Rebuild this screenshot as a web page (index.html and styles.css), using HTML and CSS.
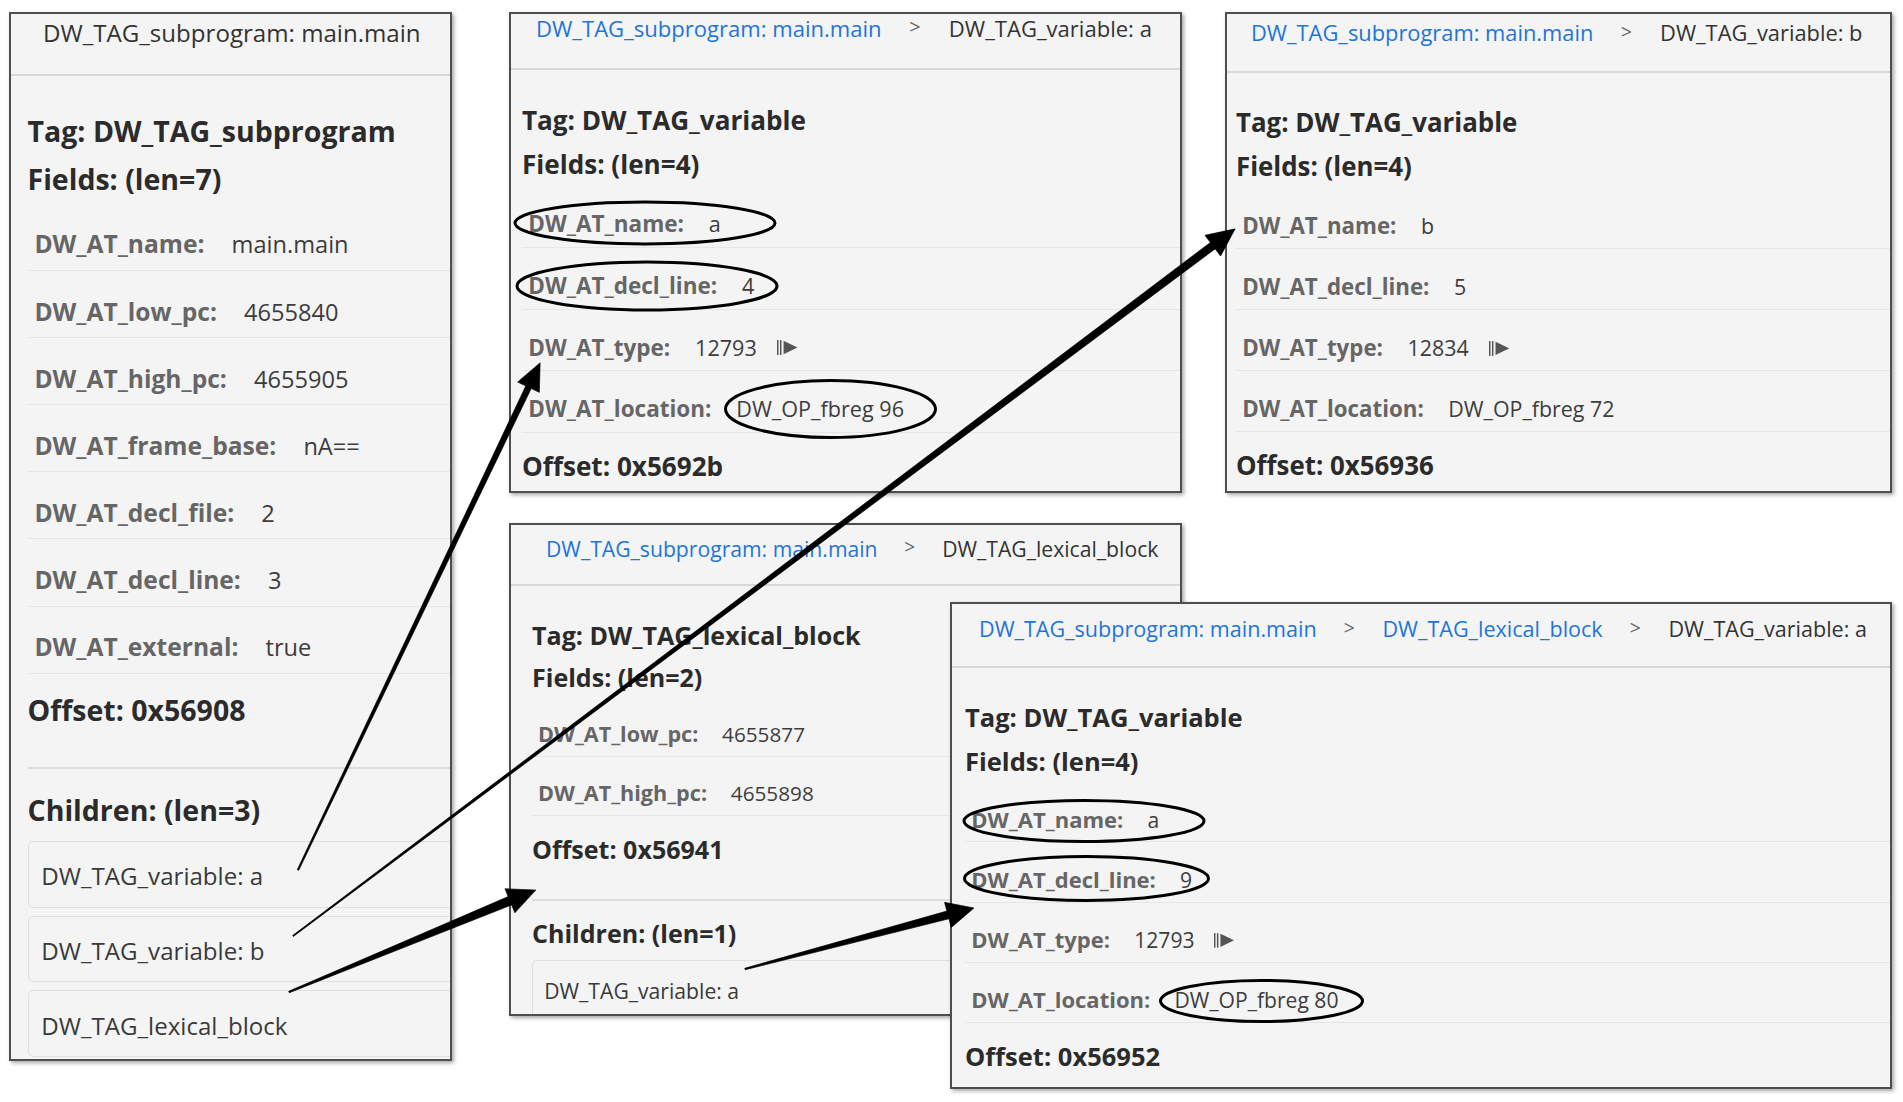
FILE: index.html
```html
<!DOCTYPE html>
<html lang="en">
<head>
<meta charset="utf-8">
<title>DWARF DIE viewer</title>
<link rel="stylesheet" href="styles.css">
</head>
<body>
<div class="canvas">

  <!-- Panel 1: subprogram -->
  <section class="win win--p1">
    <div class="win__hdr"><span class="title">DW_TAG_subprogram: main.main</span></div>
    <div class="win__body">
      <div class="heading heading--tag">Tag: DW_TAG_subprogram</div>
      <div class="heading heading--fields">Fields: (len=7)</div>
      <ul class="fields">
        <li class="field"><span class="field__k">DW_AT_name:</span><span class="field__v">main.main</span></li>
        <li class="field"><span class="field__k">DW_AT_low_pc:</span><span class="field__v">4655840</span></li>
        <li class="field"><span class="field__k">DW_AT_high_pc:</span><span class="field__v">4655905</span></li>
        <li class="field"><span class="field__k">DW_AT_frame_base:</span><span class="field__v">nA==</span></li>
        <li class="field"><span class="field__k">DW_AT_decl_file:</span><span class="field__v">2</span></li>
        <li class="field"><span class="field__k">DW_AT_decl_line:</span><span class="field__v">3</span></li>
        <li class="field"><span class="field__k">DW_AT_external:</span><span class="field__v">true</span></li>
      </ul>
      <div class="heading heading--offset">Offset: 0x56908</div>
      <hr class="rule">
      <div class="heading heading--children">Children: (len=3)</div>
      <ul class="children">
        <li class="child">DW_TAG_variable: a</li>
        <li class="child">DW_TAG_variable: b</li>
        <li class="child">DW_TAG_lexical_block</li>
      </ul>
    </div>
  </section>

  <!-- Panel 2: variable a -->
  <section class="win win--p2">
    <div class="win__hdr">
      <ol class="crumbs">
        <li class="crumb"><a href="#">DW_TAG_subprogram: main.main</a></li>
        <li class="crumb-sep">&gt;</li>
        <li class="crumb crumb--active">DW_TAG_variable: a</li>
      </ol>
    </div>
    <div class="win__body">
      <div class="heading heading--tag">Tag: DW_TAG_variable</div>
      <div class="heading heading--fields">Fields: (len=4)</div>
      <ul class="fields">
        <li class="field"><span class="field__k">DW_AT_name:</span><span class="field__v">a</span></li>
        <li class="field"><span class="field__k">DW_AT_decl_line:</span><span class="field__v">4</span></li>
        <li class="field"><span class="field__k">DW_AT_type:</span><span class="field__v">12793</span><svg class="type-ico" viewBox="0 0 21 15"><rect x="0" y="0" width="1.5" height="15"/><rect x="3" y="0" width="1.5" height="15"/><polygon points="6.6,0.8 20.5,7.5 6.6,14.2"/></svg></li>
        <li class="field"><span class="field__k">DW_AT_location:</span><span class="field__v">DW_OP_fbreg 96</span></li>
      </ul>
      <div class="heading heading--offset">Offset: 0x5692b</div>
    </div>
  </section>

  <!-- Panel 3: variable b -->
  <section class="win win--p3">
    <div class="win__hdr">
      <ol class="crumbs">
        <li class="crumb"><a href="#">DW_TAG_subprogram: main.main</a></li>
        <li class="crumb-sep">&gt;</li>
        <li class="crumb crumb--active">DW_TAG_variable: b</li>
      </ol>
    </div>
    <div class="win__body">
      <div class="heading heading--tag">Tag: DW_TAG_variable</div>
      <div class="heading heading--fields">Fields: (len=4)</div>
      <ul class="fields">
        <li class="field"><span class="field__k">DW_AT_name:</span><span class="field__v">b</span></li>
        <li class="field"><span class="field__k">DW_AT_decl_line:</span><span class="field__v">5</span></li>
        <li class="field"><span class="field__k">DW_AT_type:</span><span class="field__v">12834</span><svg class="type-ico" viewBox="0 0 21 15"><rect x="0" y="0" width="1.5" height="15"/><rect x="3" y="0" width="1.5" height="15"/><polygon points="6.6,0.8 20.5,7.5 6.6,14.2"/></svg></li>
        <li class="field"><span class="field__k">DW_AT_location:</span><span class="field__v">DW_OP_fbreg 72</span></li>
      </ul>
      <div class="heading heading--offset">Offset: 0x56936</div>
    </div>
  </section>

  <!-- Panel 4: lexical block -->
  <section class="win win--p4">
    <div class="win__hdr">
      <ol class="crumbs">
        <li class="crumb"><a href="#">DW_TAG_subprogram: main.main</a></li>
        <li class="crumb-sep">&gt;</li>
        <li class="crumb crumb--active">DW_TAG_lexical_block</li>
      </ol>
    </div>
    <div class="win__body">
      <div class="heading heading--tag">Tag: DW_TAG_lexical_block</div>
      <div class="heading heading--fields">Fields: (len=2)</div>
      <ul class="fields">
        <li class="field"><span class="field__k">DW_AT_low_pc:</span><span class="field__v">4655877</span></li>
        <li class="field"><span class="field__k">DW_AT_high_pc:</span><span class="field__v">4655898</span></li>
      </ul>
      <div class="heading heading--offset">Offset: 0x56941</div>
      <hr class="rule">
      <div class="heading heading--children">Children: (len=1)</div>
      <ul class="children">
        <li class="child">DW_TAG_variable: a</li>
      </ul>
    </div>
  </section>

  <!-- Panel 5: nested variable a -->
  <section class="win win--p5">
    <div class="win__hdr">
      <ol class="crumbs">
        <li class="crumb"><a href="#">DW_TAG_subprogram: main.main</a></li>
        <li class="crumb-sep">&gt;</li>
        <li class="crumb"><a href="#">DW_TAG_lexical_block</a></li>
        <li class="crumb-sep">&gt;</li>
        <li class="crumb crumb--active">DW_TAG_variable: a</li>
      </ol>
    </div>
    <div class="win__body">
      <div class="heading heading--tag">Tag: DW_TAG_variable</div>
      <div class="heading heading--fields">Fields: (len=4)</div>
      <ul class="fields">
        <li class="field"><span class="field__k">DW_AT_name:</span><span class="field__v">a</span></li>
        <li class="field"><span class="field__k">DW_AT_decl_line:</span><span class="field__v">9</span></li>
        <li class="field"><span class="field__k">DW_AT_type:</span><span class="field__v">12793</span><svg class="type-ico" viewBox="0 0 21 15"><rect x="0" y="0" width="1.5" height="15"/><rect x="3" y="0" width="1.5" height="15"/><polygon points="6.6,0.8 20.5,7.5 6.6,14.2"/></svg></li>
        <li class="field"><span class="field__k">DW_AT_location:</span><span class="field__v">DW_OP_fbreg 80</span></li>
      </ul>
      <div class="heading heading--offset">Offset: 0x56952</div>
    </div>
  </section>

  <!-- Annotation overlay: ellipses and arrows -->
  <svg class="annot" viewBox="0 0 1903 1102" aria-hidden="true">
    <g class="annot__rings">
      <ellipse cx="645" cy="223" rx="130" ry="21"/>
      <ellipse cx="647" cy="286" rx="130" ry="24"/>
      <ellipse cx="830.5" cy="409" rx="105" ry="28.5"/>
      <ellipse cx="1084" cy="821" rx="120" ry="20.5"/>
      <ellipse cx="1086.5" cy="878.5" rx="122" ry="22"/>
      <ellipse cx="1261.5" cy="1001" rx="101" ry="20.5"/>
    </g>
    <g class="annot__arrows">
      <polygon transform="translate(298 870) rotate(-64.48)" points="0,-0.8 535,-3 535,-12 562,0 535,12 535,3 0,0.8"/>
      <polygon transform="translate(293 936) rotate(-36.89)" points="0,-0.6 1150,-4 1150,-13 1178,0 1150,13 1150,4 0,0.6"/>
      <polygon transform="translate(289 992) rotate(-22.44)" points="0,-0.8 239,-4.5 239,-13 267,0 239,13 239,4.5 0,0.8"/>
      <polygon transform="translate(745 969) rotate(-14.92)" points="0,-0.8 210,-4 210,-13 237,0 210,13 210,4 0,0.8"/>
    </g>
  </svg>

</div>
</body>
</html>
```
FILE: styles.css
```css
* {
  box-sizing: border-box;
  margin: 0;
  padding: 0;
}

html, body {
  margin: 0;
  background: #ffffff;
}

body {
  font-family: "Open Sans", "Noto Sans", sans-serif;
}

.canvas {
  position: relative;
  width: 1903px;
  height: 1102px;
  overflow: hidden;
  background: #ffffff;
}

/* ---------- windows (cropped panels placed on a free canvas) ---------- */
.win {
  position: absolute;
  background: #f4f4f4;
  border: 2px solid #4e4e4e;
  box-shadow: 2px 2px 4px rgba(0, 0, 0, 0.35);
  overflow: hidden;
  font-size: var(--f);
  color: #3a3a3a;
  --ch-mt: 0.8em;
}

.win--p1 { left: 9px;    top: 12px;  width: 443px; height: 1049px; --f: 24.6px; --hdr-pt: 2.5px;  --hdr-pb: 26px; --hl: 32px; --pl: 16.5px; }
.win--p2 { left: 509px;  top: 12px;  width: 673px; height: 481px;  --f: 22.5px; --hdr-pt: 0px;    --hdr-pb: 25px; --hl: 25px; --pl: 11px; }
.win--p3 { left: 1225px; top: 12px;  width: 667px; height: 481px;  --f: 22.3px; --hdr-pt: 4.5px;  --hdr-pb: 23.5px; --hl: 24px; --pl: 9px; }
.win--p4 { left: 509px;  top: 523px; width: 673px; height: 493px;  --f: 21.6px; --hdr-pt: 9.5px;  --hdr-pb: 22px; --hl: 35px; --pl: 21px; --ch-mt: 0.65em; }
.win--p5 { left: 950px;  top: 602px; width: 942px; height: 487px;  --f: 22px;   --hdr-pt: 11px;   --hdr-pb: 23px; --hl: 27px; --pl: 13px; }

.win__hdr {
  font-size: 0.98em;
  line-height: 1.32;
  padding: var(--hdr-pt) 0 var(--hdr-pb) var(--hl);
  border-bottom: 2px solid #d8d8d8;
  white-space: nowrap;
  color: #333333;
}

.title {
  color: #333333;
}

.crumbs {
  display: flex;
  list-style: none;
}

.crumb a {
  color: #1f74d8;
  text-decoration: none;
}

.crumb--active {
  color: #333333;
}

.crumb-sep {
  margin: 0 1.42em 0 1.4em;
  color: #666666;
  font-size: 0.9em;
}

.win__body {
  padding: 1.5em 0 0 var(--pl);
}

/* ---------- headings ---------- */
.heading {
  font-size: 1.16em;
  font-weight: 700;
  line-height: 1.3;
  color: #2b2b2b;
  white-space: nowrap;
}

.heading--tag {
  margin-bottom: 0.39em;
}

.heading--fields {
  margin-bottom: 0.18em;
}

.heading--offset {
  margin-top: 0.65em;
}

.heading--children {
  margin-top: var(--ch-mt);
  margin-bottom: 0.41em;
}

/* ---------- field rows ---------- */
.fields {
  list-style: none;
}

.field {
  display: flex;
  align-items: baseline;
  padding: 0.93em 0 0.26em 0.28em;
  line-height: 1.5;
  border-bottom: 1px solid #e6e6e6;
  white-space: nowrap;
}

.field__k {
  font-weight: 700;
  color: #666666;
  margin-right: 1.1em;
}

.field__v {
  font-size: 0.96em;
  color: #3d3d3d;
}

.type-ico {
  width: 0.93em;
  height: 0.67em;
  margin-left: 0.9em;
  fill: #555555;
}

/* ---------- children ---------- */
.rule {
  border: 0;
  border-top: 2px solid #dcdcdc;
  margin-top: 1.54em;
}

.children {
  list-style: none;
  margin-right: -3em;
}

.child {
  font-size: 0.98em;
  line-height: 1.5;
  padding: 0.68em 0 0.51em 0.53em;
  border: 1px solid #e0e0e0;
  border-radius: 5px;
  margin-bottom: 0.33em;
  color: #3a3a3a;
  white-space: nowrap;
}

/* ---------- annotation overlay ---------- */
.annot {
  position: absolute;
  left: 0;
  top: 0;
  width: 1903px;
  height: 1102px;
  pointer-events: none;
}

.annot__rings ellipse {
  fill: none;
  stroke: #000000;
  stroke-width: 3;
}

.annot__arrows polygon {
  fill: #000000;
  stroke: #000000;
  stroke-width: 0.6;
  stroke-linejoin: miter;
}
```
